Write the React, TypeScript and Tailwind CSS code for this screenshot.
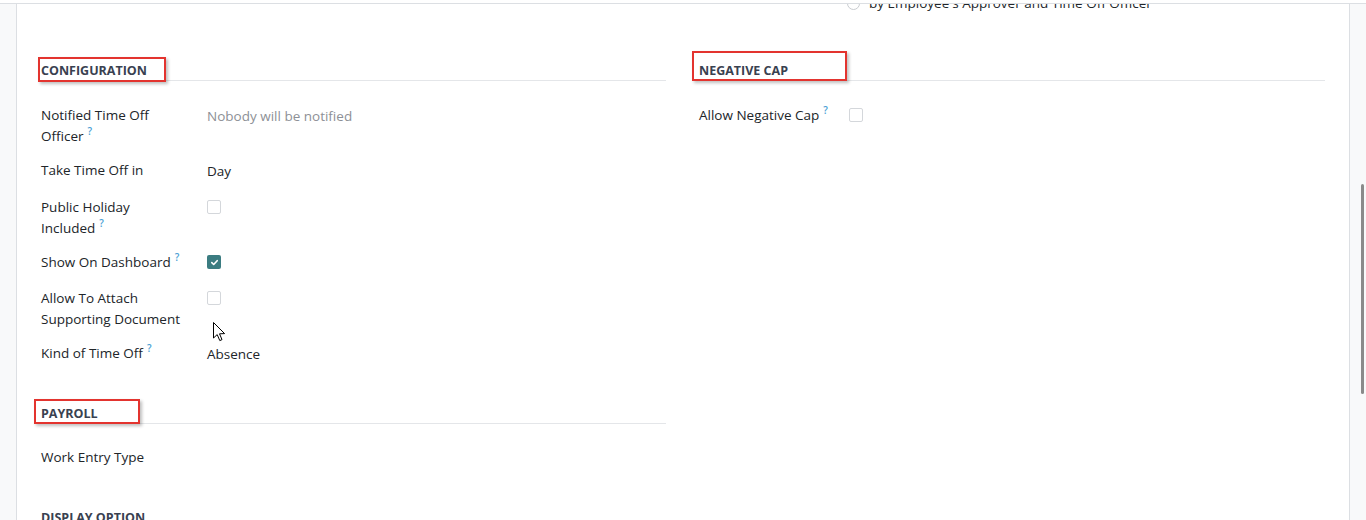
import React from "react";

type Row = {
  label: string[];
  help?: boolean;
  value?: string;
  muted?: boolean;
  check?: "on" | "off";
  gap: string;
};

const configRows: Row[] = [
  { label: ["Notified Time Off", "Officer"], help: true, value: "Nobody will be notified", muted: true, gap: "mt-[24px]" },
  { label: ["Take Time Off in"], value: "Day", gap: "mt-[13px]" },
  { label: ["Public Holiday", "Included"], help: true, check: "off", gap: "mt-[15px]" },
  { label: ["Show On Dashboard"], help: true, check: "on", gap: "mt-[13px]" },
  { label: ["Allow To Attach", "Supporting Document"], check: "off", gap: "mt-[15px]" },
  { label: ["Kind of Time Off"], help: true, value: "Absence", gap: "mt-[13px]" },
];

const Help = () => (
  <span className="relative -top-[6px] ml-[4px] text-[10px] leading-none font-semibold text-[#4b9fd5]">?</span>
);

const Checkbox = ({ on }: { on: boolean }) =>
  on ? (
    <span className="flex h-[14px] w-[14px] items-center justify-center rounded-[2px] bg-[#3b7c81]">
      <svg width="9" height="9" viewBox="0 0 10 10" fill="none">
        <path d="M2 5.2 4.1 7.2 8 3" stroke="white" strokeWidth="1.8" strokeLinecap="round" strokeLinejoin="round" />
      </svg>
    </span>
  ) : (
    <span className="block h-[14px] w-[14px] rounded-[2px] border border-[#d4d7db] bg-white" />
  );

const Heading = ({ title, box }: { title: string; box: string }) => (
  <div className="relative h-[20px] border-b border-[#e4e6e9] pt-[1px] text-[12.5px] leading-[18px] font-bold uppercase text-[#394150]">
    {title}
    <span className={`absolute border-2 border-[#e3342f] shadow-[2px_2px_3px_rgba(0,0,0,0.25)] ${box}`} />
  </div>
);

const Field = ({ row }: { row: Row }) => (
  <div className={`grid grid-cols-[166px_1fr] ${row.gap}`}>
    <div className="leading-[21px] text-[#212529]">
      {row.label.map((l, i) => (
        <div key={i} className="h-[21px]">
          {l}
          {row.help && i === row.label.length - 1 && <Help />}
        </div>
      ))}
    </div>
    <div className="pt-[1px] leading-[21px]">
      {row.check ? (
        <div className="pt-[2px]">
          <Checkbox on={row.check === "on"} />
        </div>
      ) : (
        <span className={row.muted ? "text-[#8d9096]" : "text-[#212529]"}>{row.value}</span>
      )}
    </div>
  </div>
);

const Cursor = () => (
  <svg className="absolute left-[5px] top-[-22px]" width="13" height="20" viewBox="0 0 13 20">
    <path d="M0.5 0.5 L0.5 16 L4.2 12.6 L6.8 18.6 L9 17.6 L6.5 11.8 L11.6 11.6 Z" fill="white" stroke="black" strokeWidth="1" strokeLinejoin="round" />
  </svg>
);

export default function App() {
  return (
    <div className="h-[520px] w-[1366px] overflow-hidden bg-white text-[13.5px]" style={{ fontFamily: "'Open Sans', 'Noto Sans', sans-serif" }}>
      <div className="h-[3px] bg-white" />
      <div className="flex h-[517px] border-t border-[#dcdfe3]">
        <div className="w-[17px] shrink-0 border-r border-[#dcdfe3] bg-[#f8f9fa]" />
        <div className="flex-1 overflow-hidden">
          <div className="-mt-[12px] grid grid-cols-[625px_626px] gap-x-[33px] px-[24px]">
            <div className="pt-[69px]">
              <Heading title="Configuration" box="-left-[3px] -top-[4px] w-[128px] h-[25px]" />
              {configRows.map((r, i) => (
                <div key={i} className="relative">
                  {i === 5 && (
                    <div className="absolute left-[167px] top-[1px]">
                      <Cursor />
                    </div>
                  )}
                  <Field row={r} />
                </div>
              ))}
              <div className="mt-[39px]">
                <Heading title="Payroll" box="-left-[7px] -top-[5px] w-[106px] h-[25px]" />
              </div>
              <div className="mt-[23px] leading-[21px] text-[#212529]">Work Entry Type</div>
              <div className="mt-[40px]">
                <Heading title="Display Option" box="hidden" />
              </div>
            </div>
            <div>
              <div className="flex h-[23px] items-center pl-[148px]">
                <span className="mr-[9px] block h-[13px] w-[13px] rounded-full border border-[#c9ccd0]" />
                <span className="text-[#212529]">by Employee's Approver and Time Off Officer</span>
              </div>
              <div className="pt-[46px]">
                <Heading title="Negative Cap" box="-left-[7px] -top-[10px] w-[155px] h-[30px]" />
              </div>
              <div className="mt-[24px] grid grid-cols-[150px_1fr]">
                <div className="h-[21px] leading-[21px] text-[#212529]">
                  Allow Negative Cap
                  <Help />
                </div>
                <div className="pt-[3px]">
                  <Checkbox on={false} />
                </div>
              </div>
            </div>
          </div>
        </div>
        <div className="relative w-[17px] shrink-0 border-l border-[#dcdfe3] bg-[#f8f9fa]">
          <div className="absolute left-[11px] top-[180px] h-[210px] w-[3px] rounded-full bg-[#8a8a8a]" />
        </div>
      </div>
    </div>
  );
}
